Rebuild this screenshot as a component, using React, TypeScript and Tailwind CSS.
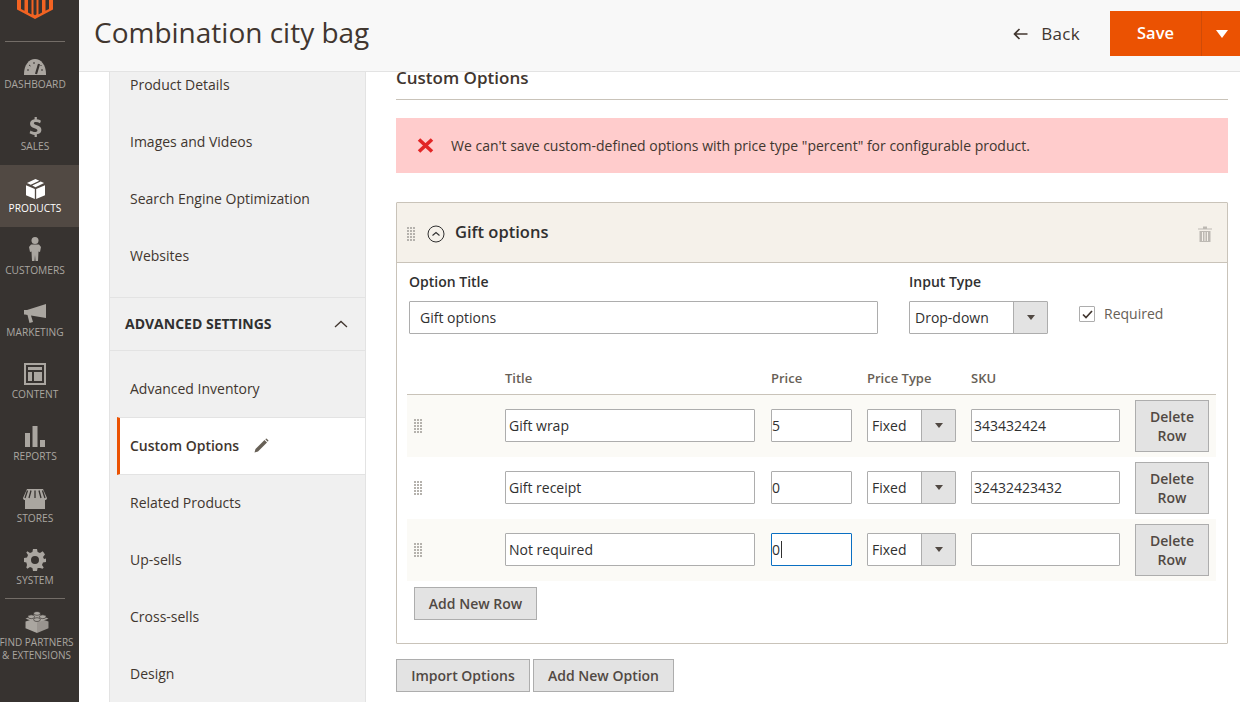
import React from "react";

const font = { fontFamily: '"Open Sans", "Noto Sans", sans-serif' };

function Dots({ className = "" }: { className?: string }) {
  const r = [];
  for (let y = 0; y < 5; y++) for (let x = 0; x < 3; x++) r.push(<rect key={x + "-" + y} x={x * 3} y={y * 3} width="2" height="2" fill="#b5b2ad" />);
  return <svg width="8" height="14" viewBox="0 0 8 14" className={className}>{r}</svg>;
}

function Logo() {
  return (
    <svg width="36" height="19" viewBox="0 0 36 19" className="block">
      <path d="M0 0H4V9L7.500 10.800V0H11V12.500L18 16.500V19L0 9.500Z M25 0H28.500V10.800L32 9V0H36V9.500L18 19V16.500L25 12.500Z M14.500 0H16.500V14.300L18 15.200L19.500 14.300V0H21.500V15.500L18 17.500L14.500 15.500Z" fill="#f26322" />
    </svg>
  );
}

const c = "#aaa6a0";
const icons: Record<string, React.ReactNode> = {
  gauge: (
    <svg width="22" height="16" viewBox="0 0 22 16"><path d="M0 15C0 6 5 0 11 0s11 6 11 15v1H0Z" fill={c} /><path d="M12 15 L15 5" stroke="#373330" strokeWidth="2.200" /><path d="M3 11h2M5 6l1.500 1M10 3v2M17.500 6l-1 1M19 11h-2" stroke="#373330" strokeWidth="1" /></svg>
  ),
  dollar: (
    <svg width="13" height="20" viewBox="0 0 14 22"><path d="M6 0h2.500v2.500c2 .2 3.500.8 4.500 1.500l-1 3c-1.500-1-3-1.500-4.500-1.500-1.500 0-2.300.5-2.300 1.400 0 .9 1 1.400 3.300 2.200 3.300 1.100 5 2.500 5 5.200 0 2.500-1.800 4.400-5 4.800V22H6v-2.300c-2.200-.2-4.200-.9-5.500-1.800l1-3.100c1.500 1 3.300 1.700 5 1.700 1.600 0 2.600-.7 2.600-1.700 0-1-1-1.600-3.200-2.400C2.700 11.300 1 9.900 1 7.400c0-2.400 1.800-4.300 5-4.800Z" fill={c} /></svg>
  ),
  box: (
    <svg width="19" height="20" viewBox="0 0 20 21"><path d="M0 6.500 9.300 10.500V21L0 17ZM20 6.500 10.700 10.500V21L20 17Z" fill="#fff" /><path d="M10 0 14 1.800 5 6 1 4.300ZM15.500 2.500 19 4.200 10 8.600 6.500 6.900Z" fill="#fff" /></svg>
  ),
  person: (
    <svg width="12" height="24" viewBox="0 0 12 24"><circle cx="6" cy="3.500" r="3.500" fill={c} /><path d="M2 7.500H10L12 10 11 15 9.500 14.500 9 24H6.500L6 18 5.500 24H3L2.500 14.500 1 15 0 10Z" fill={c} /></svg>
  ),
  mega: (
    <svg width="22" height="19" viewBox="0 0 22 19"><path d="M22 0V14L7 11.500 9 18 5.500 19 3.500 11 1 10.500H0V6H3Z" fill={c} /></svg>
  ),
  content: (
    <svg width="22" height="22" viewBox="0 0 22 22"><path fillRule="evenodd" d="M0 0H22V22H0ZM2 2V20H20V2Z" fill={c} /><path d="M4 4H18V7H4ZM4 9H8V18H4ZM10 9H18V18H10Z" fill={c} /></svg>
  ),
  reports: (
    <svg width="20" height="21" viewBox="0 0 20 21"><path d="M0 7H5V21H0ZM7.500 0H12.500V21H7.500ZM15 14H20V21H15Z" fill={c} /></svg>
  ),
  store: (
    <svg width="24" height="20" viewBox="0 0 24 20"><path d="M4 0H20L24 9C24 10.500 23 11 22 11V20H2V11C1 11 0 10.500 0 9Z" fill={c} /><path d="M8 1.500 6 9M12 1.500V9M16 1.500 18 9M4.500 1.500 2 9M19.500 1.500 22 9" stroke="#373330" strokeWidth="1.300" /></svg>
  ),
  gear: (
    <svg width="22" height="22" viewBox="0 0 22 22"><path fillRule="evenodd" d="M9 0H13L13.600 3 16 4 18.600 2.300 19.700 3.400 21 5.500 19 8 20 10 22 9.500V13L19 13.600 18 16 19.700 18.600 18.600 19.700 16 19 13.600 19 13 22H9L8.400 19 6 18 3.400 19.700 2.300 18.600 3 16 2.400 13.600 0 13V9L3 8.400 4 6 2.300 3.400 3.400 2.300 6 4 8.400 3ZM11 7A4 4 0 1 0 11 15 4 4 0 1 0 11 7Z" fill={c} /></svg>
  ),
  lego: (
    <svg width="24" height="22" viewBox="0 0 24 23"><path d="M12 7 24 11V18L12 23Z" fill={c} opacity=".85" /><path d="M12 7 0 11V18L12 23Z" fill={c} /><path d="M12 12 0 8 12 2 24 8Z" fill={c} /><ellipse cx="12" cy="2.500" rx="3.500" ry="2" fill={c} stroke="#373330" strokeWidth=".7" /><ellipse cx="6" cy="6" rx="3.500" ry="2" fill={c} stroke="#373330" strokeWidth=".7" /><ellipse cx="18" cy="6" rx="3.500" ry="2" fill={c} stroke="#373330" strokeWidth=".7" /><ellipse cx="12" cy="9" rx="3.500" ry="2" fill={c} stroke="#373330" strokeWidth=".7" /></svg>
  ),
};

function SideItem({ icon, label, active }: { icon: string; label: string; active?: boolean }) {
  return (
    <div className={`h-[62px] pr-[9px] flex flex-col items-center justify-end pb-[12px] ${active ? "bg-[#514943] text-white" : "text-[#aaa6a0]"}`}>
      <div className="h-[24px] flex items-end justify-center mb-[2px]">{icons[icon]}</div>
      <div className="text-[10.2px] leading-[14px] whitespace-nowrap">{label}</div>
    </div>
  );
}

function NavItem({ children, h = "h-[57px]" }: { children: React.ReactNode; h?: string }) {
  return <div className={`${h} flex items-center pl-[20px] text-[14px] text-[#41362f]`}>{children}</div>;
}

function TextInput({ value, className = "", focused }: { value: string; className?: string; focused?: boolean }) {
  return (
    <input
      readOnly
      value={value}
      className={`h-[33px] bg-white border rounded-[1px] text-[14px] text-[#303030] outline-none ${focused ? "border-[#0a6fc2]" : "border-[#adadad]"} ${className}`}
    />
  );
}

function Select({ value, w, arrow, pad }: { value: string; w: string; arrow: string; pad: string }) {
  return (
    <div className={`${w} h-[33px] flex border border-[#adadad] rounded-[1px] bg-white shrink-0`}>
      <div className={`flex-1 flex items-center ${pad} text-[14px] text-[#303030]`}>{value}</div>
      <div className={`${arrow} bg-[#e3e3e3] border-l border-[#adadad] flex items-center justify-center`}>
        <svg width="10" height="6" viewBox="0 0 10 6"><path d="M1 0H9L5 5Z" fill="#514943" /></svg>
      </div>
    </div>
  );
}

function Row({ title, price, sku, shaded, focused }: { title: string; price: string; sku: string; shaded?: boolean; focused?: boolean }) {
  return (
    <div className={`h-[62px] flex items-start pt-[14px] ${shaded ? "bg-[#fbfaf6]" : "bg-white"}`}>
      <Dots className="ml-[7px] mr-[83px] mt-[10px] shrink-0" />
      <TextInput value={title} className="w-[250px] px-[3px] mr-[16px]" />
      <div className="relative mr-[15px]">
        <TextInput value={price} className="w-[81px] px-0 block" focused={focused} />
        {focused && <span className="absolute left-[10px] top-[8px] w-px h-[17px] bg-[#303030]" />}
      </div>
      <div className="mr-[15px]"><Select value="Fixed" w="w-[89px]" arrow="w-[34px]" pad="pl-[4px]" /></div>
      <TextInput value={sku} className="w-[149px] px-[2px] mr-[15px]" />
      <button className="w-[74px] h-[52px] mt-[-9px] bg-[#e3e3e3] border border-[#adadad] text-[14px] leading-[19px] text-[#514943] font-semibold">Delete<br />Row</button>
    </div>
  );
}

function GreyBtn({ children, w }: { children: React.ReactNode; w: string }) {
  return <button className={`${w} h-[33px] bg-[#e3e3e3] border border-[#adadad] text-[14px] font-semibold text-[#514943] flex items-center justify-center`}>{children}</button>;
}

export default function App() {
  return (
    <div style={font} className="w-[1240px] h-[702px] flex overflow-hidden bg-white text-[#41362f]">
      <aside className="w-[79px] shrink-0 bg-[#373330] flex flex-col">
        <div className="h-[42px] mb-[-1px] shrink-0 ml-[5px] w-[60px] border-b border-[#736d67] flex justify-center">
          <Logo />
        </div>
        <SideItem icon="gauge" label="DASHBOARD" />
        <SideItem icon="dollar" label="SALES" />
        <SideItem icon="box" label="PRODUCTS" active />
        <SideItem icon="person" label="CUSTOMERS" />
        <SideItem icon="mega" label="MARKETING" />
        <SideItem icon="content" label="CONTENT" />
        <SideItem icon="reports" label="REPORTS" />
        <SideItem icon="store" label="STORES" />
        <SideItem icon="gear" label="SYSTEM" />
        <div className="ml-[5px] w-[60px] border-t border-[#736d67] mt-[-1px]" />
        <div className="flex flex-col items-center mt-[12px] mr-[6px] text-[#aaa6a0]">
          {icons.lego}
          <div className="text-[10px] leading-[13px] text-center whitespace-nowrap mt-[3px]">FIND PARTNERS<br />&amp; EXTENSIONS</div>
        </div>
      </aside>

      <div className="flex-1 flex flex-col min-w-0">
        <header className="h-[72px] shrink-0 bg-[#f8f8f8] border-b border-[#e3e3e3] flex items-start">
          <h1 className="ml-[15px] mt-[13px] text-[28px] leading-[38px] text-[#41362f] font-normal flex-1">Combination city bag</h1>
          <div className="mt-[11px] flex items-center h-[45px]">
            <svg width="15" height="12" viewBox="0 0 15 12" className="mr-[13px]"><path d="M6.500 1 1.500 6l5 5M1.500 6H14.500" stroke="#41362f" strokeWidth="1.600" fill="none" /></svg>
            <span className="text-[17px] tracking-[0.3px] font-normal mr-[30px] text-[#41362f]">Back</span>
            <div className="w-[130px] h-[45px] bg-[#eb5202] flex text-white">
              <div className="w-[92px] flex items-center justify-center text-[16.500px] font-semibold border-r border-[#cf4b08]">Save</div>
              <div className="flex-1 flex items-center justify-center pl-[1px]">
                <svg width="12" height="8" viewBox="0 0 12 8"><path d="M0 0H12L6 8Z" fill="#fff" /></svg>
              </div>
            </div>
          </div>
        </header>

        <div className="flex-1 flex overflow-hidden min-h-0">
          <nav className="ml-[30px] w-[257px] shrink-0 bg-[#f0f0f0] border-x border-[#e3e3e3] self-stretch overflow-hidden">
            <NavItem h="h-[41px] pb-[17px]">Product Details</NavItem>
            <NavItem>Images and Videos</NavItem>
            <NavItem>Search Engine Optimization</NavItem>
            <NavItem>Websites</NavItem>
            <div className="mt-[13px] h-[54px] pb-[1px] border-y border-[#e3e3e3] flex items-center justify-between pl-[15px] pr-[17px]">
              <span className="text-[14px] font-bold text-[#303030]">ADVANCED SETTINGS</span>
              <svg width="14" height="8" viewBox="0 0 14 8"><path d="M1 7 7 1.500 13 7" stroke="#41362f" strokeWidth="1.300" fill="none" /></svg>
            </div>
            <div className="h-[66px] pt-[8px] flex items-center pl-[20px] text-[14px] text-[#41362f]">Advanced Inventory</div>
            <div className="ml-[7px] mr-[-1px] h-[58px] pb-[2px] bg-white border-l-[3px] border-l-[#eb5202] border-y border-y-[#e3e3e3] flex items-center pl-[10px] text-[14px] font-semibold text-[#41362f] gap-[15px]">
              Custom Options
              <svg width="15" height="15" viewBox="0 0 15 15"><path d="M0.500 14.500 1.500 11 10.500 2 13 4.500 4 13.500Z" fill="#676056" /><path d="M11.500 1 12.500 0.500 14.500 2.500 14 3.500 13.500 3.500 11.500 1.500Z" fill="#676056" /></svg>
            </div>
            <NavItem h="h-[56px] pb-[2px]">Related Products</NavItem>
            <NavItem>Up-sells</NavItem>
            <NavItem>Cross-sells</NavItem>
            <NavItem>Design</NavItem>
          </nav>

          <main className="ml-[30px] w-[832px] shrink-0">
            <div className="h-[28px] border-b border-[#c9c3b9] text-[17px] leading-[11px] font-semibold text-[#41362f]">Custom Options</div>
            <div className="mt-[18px] h-[55px] bg-[#ffcccc] flex items-center pl-[21px] text-[14px] text-[#41362f]">
              <svg width="17" height="15" viewBox="0 0 17 15" className="mr-[17px]"><path d="M2 1.500 8.500 7.500M15 1.500 8.500 7.500M2 13.500 8.500 7.500M15 13.500 8.500 7.500" stroke="#e22626" strokeWidth="3.600" /></svg>
              We can't save custom-defined options with price type "percent" for configurable product.
            </div>

            <section className="mt-[29px] h-[442px] border border-[#c9c3b9] rounded-[1px]">
              <div className="h-[60px] bg-[#f5f1ea] border-b border-[#c9c3b9] flex items-center pl-[10px] pr-[15px] pb-[1px]">
                <Dots className="mt-[3px]" />
                <svg width="18" height="18" viewBox="0 0 18 18" className="ml-[12px] mr-[10px] mt-[3px]"><circle cx="9" cy="9" r="8" stroke="#303030" strokeWidth="1" fill="none" /><path d="M5.500 10.500 9 7.500l3.500 3" stroke="#303030" strokeWidth="1.100" fill="none" /></svg>
                <span className="text-[16.500px] font-semibold text-[#303030] flex-1">Gift options</span>
                <svg width="14" height="16" viewBox="0 0 14 16" className="mt-[3px]"><path d="M0 2.500H14V3.500H0ZM5 0.500H9V2.500H5ZM1.500 5H12.500V16H1.500Z" fill="#bdb9b3" /><path d="M4.500 6V15M7 6V15M9.500 6V15" stroke="#f5f1ea" /></svg>
              </div>

              <div className="px-[12px]">
                <div className="flex pt-[9px]">
                  <div className="w-[469px] mr-[31px]">
                    <div className="text-[14px] leading-[19px] font-semibold text-[#303030] mb-[10px]">Option Title</div>
                    <TextInput value="Gift options" className="w-full px-[10px] block" />
                  </div>
                  <div className="mr-[31px]">
                    <div className="text-[14px] leading-[19px] font-semibold text-[#303030] mb-[10px]">Input Type</div>
                    <Select value="Drop-down" w="w-[139px]" arrow="w-[34px]" pad="pl-[5px]" />
                  </div>
                  <div className="mt-[34px] flex items-start gap-[9px]">
                    <div className="w-[16px] h-[16px] border border-[#adadad] rounded-[1px] flex items-center justify-center bg-white">
                      <svg width="11" height="9" viewBox="0 0 11 9"><path d="M1 4.500 4 7.500 10 1" stroke="#41362f" strokeWidth="1.700" fill="none" /></svg>
                    </div>
                    <span className="text-[14px] leading-[16px] text-[#676056]">Required</span>
                  </div>
                </div>

                <div className="ml-[-2px] w-[809px] mt-[27px]">
                  <div className="h-[34px] flex items-center pt-[3px] border-b border-[#c9c3b9] text-[13px] font-semibold text-[#676056]">
                    <span className="ml-[98px] w-[266px]">Title</span>
                    <span className="w-[96px]">Price</span>
                    <span className="w-[104px]">Price Type</span>
                    <span>SKU</span>
                  </div>
                  <Row title="Gift wrap" price="5" sku="343432424" shaded />
                  <Row title="Gift receipt" price="0" sku="32432423432" />
                  <Row title="Not required" price="0" sku="" shaded focused />
                  <div className="mt-[6px] ml-[7px]"><GreyBtn w="w-[123px]">Add New Row</GreyBtn></div>
                </div>
              </div>
            </section>

            <div className="mt-[15px] flex gap-[3px]">
              <GreyBtn w="w-[134px]">Import Options</GreyBtn>
              <GreyBtn w="w-[141px]">Add New Option</GreyBtn>
            </div>
          </main>
        </div>
      </div>
    </div>
  );
}
